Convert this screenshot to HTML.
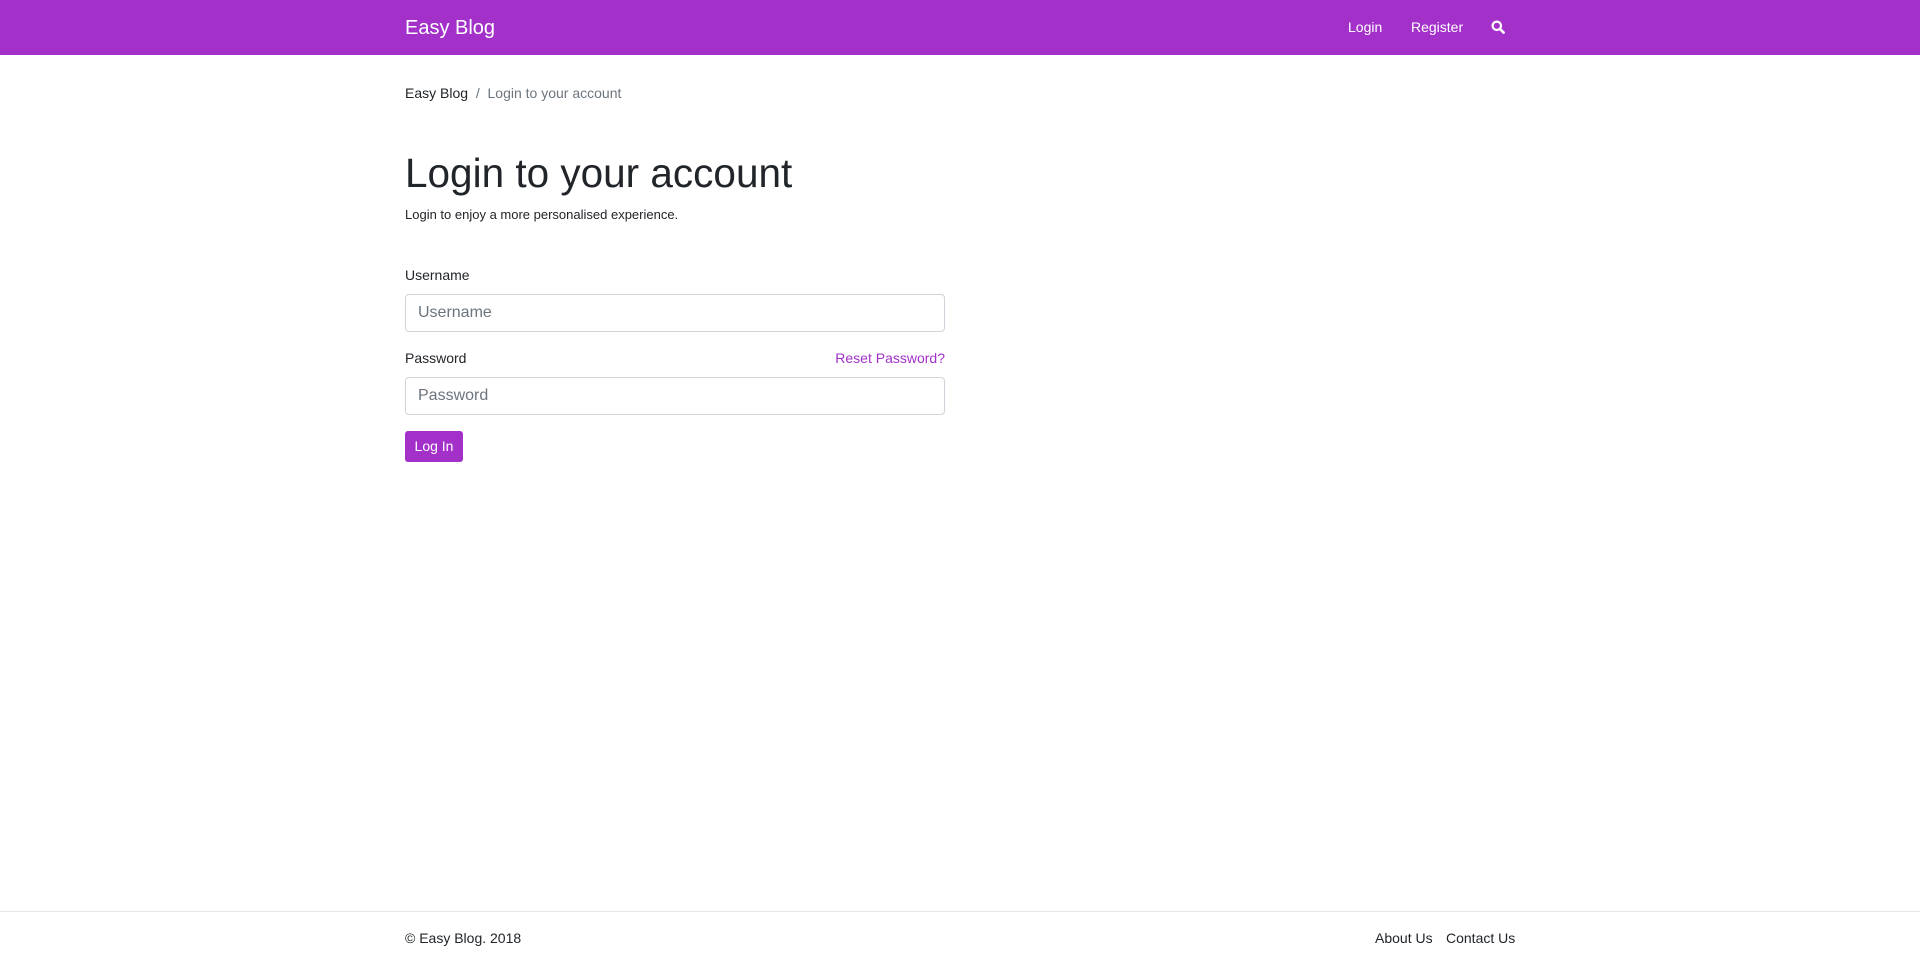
<!DOCTYPE html>
<html><head><meta charset="utf-8"><style>
*{box-sizing:border-box;margin:0;padding:0}
body{width:1920px;height:964px;position:relative;font-family:"Liberation Sans",sans-serif;color:#212529;background:#fff;overflow:hidden}
.nav{position:absolute;left:0;top:0;width:1920px;height:55px;background:#a330c9}
.abs{position:absolute;white-space:nowrap}
.nav .abs{color:#fff}
input{position:absolute;left:405px;width:540px;height:38px;border:1px solid #ced4da;border-radius:4px;font:16px "Liberation Sans",sans-serif;padding:0 12px;color:#6c757d}
input::placeholder{color:#6c757d}
.btn{position:absolute;left:405px;top:431px;width:58px;height:31px;background:#a330c9;color:#fff;border-radius:3px;font-size:14px;line-height:31px;text-align:center}
.foot{position:absolute;left:0;top:911px;width:1920px;border-top:1px solid #e5e5e5}
</style></head><body>
<div class="nav">
<div class="abs" style="left:405px;top:17px;font-size:20px">Easy Blog</div>
<div class="abs" style="left:1348px;top:19px;font-size:14px">Login</div>
<div class="abs" style="left:1411px;top:19px;font-size:14px">Register</div>
<svg class="abs" style="left:1491px;top:20px" width="14" height="14" viewBox="0 0 14 14"><circle cx="5.8" cy="5.8" r="4.2" fill="none" stroke="#fff" stroke-width="2.2"/><line x1="9" y1="9" x2="12.6" y2="12.6" stroke="#fff" stroke-width="2.6" stroke-linecap="round"/></svg>
</div>
<div class="abs" style="left:405px;top:85px;font-size:14px">Easy Blog <span style="color:#6c757d">&nbsp;/&nbsp; Login to your account</span></div>
<div class="abs" style="left:405px;top:150px;font-size:40.5px;font-weight:300">Login to your account</div>
<div class="abs" style="left:405px;top:207px;font-size:13px">Login to enjoy a more personalised experience.</div>
<div class="abs" style="left:405px;top:267px;font-size:14px">Username</div>
<input style="top:294px" placeholder="Username">
<div class="abs" style="left:405px;top:350px;font-size:14px">Password</div>
<div class="abs" style="right:975px;top:350px;font-size:14px;color:#a330c9">Reset Password?</div>
<input style="top:377px" placeholder="Password">
<div class="btn">Log In</div>
<div class="foot"></div>
<div class="abs" style="left:405px;top:930px;font-size:14px">© Easy Blog. 2018</div>
<div class="abs" style="left:1375px;top:930px;font-size:14px">About Us</div>
<div class="abs" style="left:1446px;top:930px;font-size:14px">Contact Us</div>
</body></html>
